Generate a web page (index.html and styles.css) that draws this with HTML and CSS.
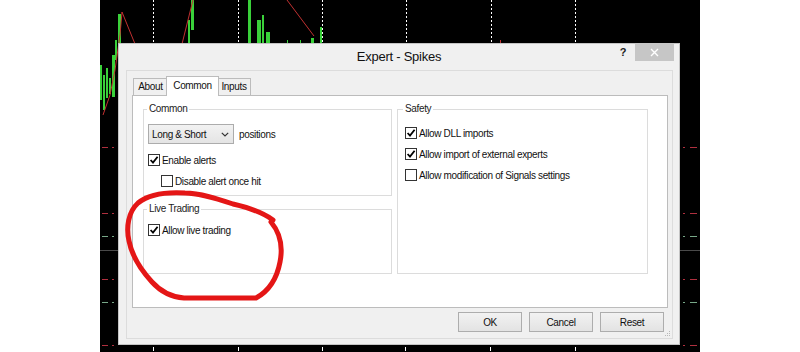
FILE: index.html
```html
<!DOCTYPE html>
<html>
<head>
<meta charset="utf-8">
<title>Expert - Spikes</title>
<link rel="stylesheet" href="styles.css">
</head>
<body>
<div class="screen">
  <div class="chart">
    <svg class="chart-canvas" width="600" height="352" viewBox="0 0 600 352">
      <g stroke="#ffffff" stroke-width="1" stroke-dasharray="2 2">
        <line x1="53.5" y1="0" x2="53.5" y2="44"/>
        <line x1="138.5" y1="0" x2="138.5" y2="44"/>
        <line x1="222.5" y1="0" x2="222.5" y2="44"/>
        <line x1="306.5" y1="0" x2="306.5" y2="44"/>
        <line x1="391.5" y1="0" x2="391.5" y2="44"/>
        <line x1="475.5" y1="0" x2="475.5" y2="44"/>
      </g>
      <g stroke="#ffffff" stroke-width="1">
        <line x1="53.5" y1="347" x2="53.5" y2="351"/>
        <line x1="138.5" y1="347" x2="138.5" y2="351"/>
        <line x1="222.5" y1="347" x2="222.5" y2="351"/>
        <line x1="305.5" y1="347" x2="305.5" y2="351"/>
        <line x1="390.5" y1="347" x2="390.5" y2="351"/>
        <line x1="475.5" y1="347" x2="475.5" y2="351"/>
      </g>
      <line x1="0" y1="250.5" x2="600" y2="250.5" stroke="#4a4a4a" stroke-width="1"/>
      <g stroke-width="1">
        <g stroke="#b0303f">
          <line x1="2" y1="147.5" x2="8" y2="147.5"/><line x1="12" y1="147.5" x2="14" y2="147.5"/>
          <line x1="2" y1="213.5" x2="8" y2="213.5"/><line x1="12" y1="213.5" x2="14" y2="213.5"/>
          <line x1="2" y1="279.5" x2="8" y2="279.5"/><line x1="12" y1="279.5" x2="14" y2="279.5"/>
          <line x1="2" y1="345.5" x2="8" y2="345.5"/><line x1="12" y1="345.5" x2="14" y2="345.5"/>
          <line x1="583" y1="147.5" x2="585" y2="147.5"/><line x1="590" y1="147.5" x2="597" y2="147.5"/>
          <line x1="583" y1="213.5" x2="585" y2="213.5"/><line x1="590" y1="213.5" x2="597" y2="213.5"/>
          <line x1="583" y1="279.5" x2="585" y2="279.5"/><line x1="590" y1="279.5" x2="597" y2="279.5"/>
          <line x1="583" y1="345.5" x2="585" y2="345.5"/><line x1="590" y1="345.5" x2="597" y2="345.5"/>
        </g>
        <g stroke="#78a888">
          <line x1="2" y1="236.5" x2="8" y2="236.5"/><line x1="12" y1="236.5" x2="14" y2="236.5"/>
          <line x1="2" y1="302.5" x2="8" y2="302.5"/><line x1="12" y1="302.5" x2="14" y2="302.5"/>
          <line x1="583" y1="236.5" x2="585" y2="236.5"/><line x1="590" y1="236.5" x2="597" y2="236.5"/>
          <line x1="583" y1="302.5" x2="585" y2="302.5"/><line x1="590" y1="302.5" x2="597" y2="302.5"/>
        </g>
      </g>
      <g fill="#3ad13a">
        <rect x="0" y="65" width="2" height="35"/>
        <rect x="3" y="75" width="2" height="35"/>
        <rect x="6" y="68" width="2" height="30"/>
        <rect x="9" y="78" width="2" height="16"/>
        <rect x="12" y="55" width="3" height="42"/>
        <rect x="15" y="40" width="2" height="20"/>
        <rect x="18" y="14" width="3" height="30"/>
        <rect x="88" y="20" width="2" height="24"/>
        <rect x="91" y="0" width="3" height="30"/>
        <rect x="148" y="0" width="3" height="44"/>
        <rect x="157" y="20" width="4" height="24"/>
        <rect x="162" y="15" width="2" height="29"/>
        <rect x="166" y="32" width="4" height="12"/>
        <rect x="187" y="40" width="1" height="4"/>
        <rect x="200" y="40" width="1" height="4"/>
        <rect x="211" y="38" width="3" height="6"/>
        <rect x="220" y="27" width="2" height="17"/>
      </g>
      <g stroke="#c03030" stroke-width="1" fill="none">
        <polyline points="3,115 10,95 15,70 20,35 22,12 35,44"/>
        <polyline points="82,44 93,0"/>
        <polyline points="187,0 214,36"/>
        <line x1="400.5" y1="40" x2="400.5" y2="44"/>
      </g>
    </svg>

    <div class="dialog">
      <div class="titlebar">
        <span class="title">Expert - Spikes</span>
        <div class="controls">
          <span class="help">?</span>
          <span class="close">
            <svg width="9" height="9" viewBox="0 0 9 9"><path d="M1 1 L8 8 M8 1 L1 8" stroke="#ffffff" stroke-width="1.4"/></svg>
          </span>
        </div>
      </div>
      <div class="client">
        <div class="tabs">
          <div class="tab tab-about">About</div>
          <div class="tab tab-common active">Common</div>
          <div class="tab tab-inputs">Inputs</div>
        </div>
        <div class="panel">
          <div class="groups">
            <fieldset class="group group-common">
              <legend>Common</legend>
              <div class="select-row">
                <div class="select">
                  <span>Long &amp; Short</span>
                  <svg width="8" height="5" viewBox="0 0 8 5"><path d="M0.8 0.8 L4 4 L7.2 0.8" stroke="#333" stroke-width="1.2" fill="none"/></svg>
                </div>
                <span class="select-label">positions</span>
              </div>
              <div class="check first">
                <span class="box"><svg width="10" height="10" viewBox="0 0 10 10"><path d="M1.6 5 L4 7.6 L8.6 1.8" stroke="#000" stroke-width="1.8" fill="none"/></svg></span>
                <span>Enable alerts</span>
              </div>
              <div class="check indent">
                <span class="box"></span>
                <span>Disable alert once hit</span>
              </div>
            </fieldset>
            <fieldset class="group group-safety">
              <legend>Safety</legend>
              <div class="check first">
                <span class="box"><svg width="10" height="10" viewBox="0 0 10 10"><path d="M1.6 5 L4 7.6 L8.6 1.8" stroke="#000" stroke-width="1.8" fill="none"/></svg></span>
                <span>Allow DLL imports</span>
              </div>
              <div class="check">
                <span class="box"><svg width="10" height="10" viewBox="0 0 10 10"><path d="M1.6 5 L4 7.6 L8.6 1.8" stroke="#000" stroke-width="1.8" fill="none"/></svg></span>
                <span>Allow import of external experts</span>
              </div>
              <div class="check">
                <span class="box"></span>
                <span>Allow modification of Signals settings</span>
              </div>
            </fieldset>
            <fieldset class="group group-live">
              <legend>Live Trading</legend>
              <div class="check first">
                <span class="box"><svg width="10" height="10" viewBox="0 0 10 10"><path d="M1.6 5 L4 7.6 L8.6 1.8" stroke="#000" stroke-width="1.8" fill="none"/></svg></span>
                <span>Allow live trading</span>
              </div>
            </fieldset>
          </div>
        </div>
        <div class="buttons">
          <button class="btn">OK</button>
          <button class="btn">Cancel</button>
          <button class="btn">Reset</button>
        </div>
        <svg class="grip" width="6" height="6" viewBox="0 0 6 6">
          <g fill="#b8b8b8">
            <rect x="4" y="0" width="1" height="1"/>
            <rect x="2" y="2" width="1" height="1"/><rect x="4" y="2" width="1" height="1"/>
            <rect x="0" y="4" width="1" height="1"/><rect x="2" y="4" width="1" height="1"/><rect x="4" y="4" width="1" height="1"/>
          </g>
        </svg>
      </div>
    </div>
  </div>

  <svg class="scribble" width="800" height="352" viewBox="0 0 800 352">
    <path d="M 273 220 C 262 212, 246 207, 233 204 C 218 199, 200 193, 185 193 C 168 192, 149 194, 138 203 C 128 212, 126 228, 129 241 C 132 256, 141 270, 152 282 C 161 292, 171 297, 184 298 L 256 298 C 269 291, 277 278, 280 262 C 283 247, 281 234, 271 222"
      stroke="#e41616" stroke-width="5" fill="none" stroke-linecap="round" stroke-linejoin="round"/>
  </svg>
</div>
</body>
</html>
```

FILE: styles.css
```css
html, body {
  margin: 0;
  padding: 0;
  background: #ffffff;
}

body {
  font-family: "Liberation Sans", Arial, sans-serif;
  color: #1a1a1a;
}

.screen {
  position: relative;
  width: 800px;
  height: 352px;
  overflow: hidden;
}

.chart {
  position: relative;
  margin-left: 100px;
  width: 600px;
  height: 352px;
  background: #000000;
}

.chart-canvas {
  position: absolute;
  left: 0;
  top: 0;
  display: block;
}

.dialog {
  position: absolute;
  left: 18px;
  top: 43px;
  width: 562px;
  height: 302px;
  box-sizing: border-box;
  border: 1px solid #c4c4c4;
  background: #f0f0f0;
  display: flex;
  flex-direction: column;
}

.titlebar {
  height: 26px;
  flex: none;
  display: grid;
  grid-template-columns: 1fr auto 1fr;
  align-items: start;
}

.title {
  grid-column: 2;
  font-size: 13px;
  letter-spacing: -0.25px;
  line-height: 26px;
  color: #111;
}

.controls {
  grid-column: 3;
  justify-self: end;
  display: flex;
  align-items: flex-start;
  margin-right: 5px;
  margin-top: -1px;
}

.help {
  width: 12px;
  height: 18px;
  line-height: 18px;
  text-align: center;
  font-size: 11px;
  font-weight: bold;
  color: #222;
  margin-right: 6px;
}

.close {
  width: 39px;
  height: 18px;
  background: #c6c6c6;
  display: flex;
  align-items: center;
  justify-content: center;
}

.close svg {
  display: block;
}

.client {
  position: relative;
  flex: 1;
  margin: 0 6px 5px 7px;
  border: 1px solid #dcdcdc;
  padding: 5px 4px 0 5px;
  display: flex;
  flex-direction: column;
  font-size: 10px;
  letter-spacing: -0.35px;
}

.tabs {
  display: flex;
  align-items: flex-end;
  height: 19px;
  padding-left: 1px;
  position: relative;
  z-index: 1;
}

.tab {
  box-sizing: border-box;
  height: 17px;
  border: 1px solid #bcbcbc;
  border-bottom: none;
  background: #f0f0f0;
  text-align: center;
  line-height: 16px;
  color: #111;
}

.tab-about {
  width: 35px;
}

.tab-common {
  width: 53px;
  margin: 0 -2px;
}

.tab-inputs {
  width: 34px;
}

.tab.active {
  height: 20px;
  margin-bottom: -1px;
  background: #ffffff;
  line-height: 17px;
  position: relative;
  z-index: 2;
}

.panel {
  box-sizing: border-box;
  height: 213px;
  flex: none;
  border: 1px solid #bcbcbc;
  background: #ffffff;
  padding: 7px 0 0 10px;
}

.groups {
  display: grid;
  grid-template-columns: 249px 251px;
  grid-template-rows: 93px 71px;
  column-gap: 5px;
  row-gap: 7px;
}

.group {
  margin: 0;
  padding: 0;
  min-width: 0;
  box-sizing: border-box;
  border: 1px solid #dcdcdc;
}

.group legend {
  padding: 0 2px;
  margin-left: 3px;
  line-height: 12px;
  color: #222;
}

.group-common {
  grid-column: 1;
  grid-row: 1;
}

.group-live {
  grid-column: 1;
  grid-row: 2;
}

.group-safety {
  grid-column: 2;
  grid-row: 1 / span 2;
}

.group-safety legend {
  margin-left: 5px;
}

.select-row {
  display: flex;
  align-items: center;
  margin: 9px 0 0 4px;
}

.select {
  box-sizing: border-box;
  width: 86px;
  height: 20px;
  border: 1px solid #acacac;
  background: linear-gradient(#f2f2f2, #e4e4e4);
  display: flex;
  align-items: center;
  justify-content: space-between;
  padding: 0 4px 0 3px;
  color: #111;
}

.select svg {
  display: block;
}

.select-label {
  margin-left: 5px;
  color: #111;
}

.check {
  display: flex;
  align-items: center;
  height: 14px;
  margin-top: 7px;
  margin-left: 4px;
  color: #111;
}

.check.first {
  margin-top: 9px;
}

.check.indent {
  margin-left: 17px;
}

.group-safety .check {
  margin-left: 7px;
}

.group-safety .check.first {
  margin-top: 11px;
}

.group-live .check.first {
  margin-top: 8px;
}

.box {
  box-sizing: border-box;
  width: 12px;
  height: 12px;
  border: 1px solid #333;
  background: #fff;
  margin-right: 2px;
  display: flex;
  align-items: center;
  justify-content: center;
  flex: none;
}

.box svg {
  display: block;
}

.buttons {
  display: flex;
  justify-content: flex-end;
  gap: 7px;
  margin-top: 4px;
  margin-right: 4px;
}

.btn {
  box-sizing: border-box;
  width: 64px;
  height: 20px;
  border: 1px solid #adadad;
  border-radius: 0;
  background: linear-gradient(#f2f2f2, #e3e3e3);
  font-family: "Liberation Sans", Arial, sans-serif;
  font-size: 10px;
  letter-spacing: -0.35px;
  color: #111;
  padding: 0;
}

.grip {
  position: absolute;
  right: 1px;
  bottom: 1px;
  display: block;
}

.scribble {
  position: absolute;
  left: 0;
  top: 0;
  pointer-events: none;
}
```
